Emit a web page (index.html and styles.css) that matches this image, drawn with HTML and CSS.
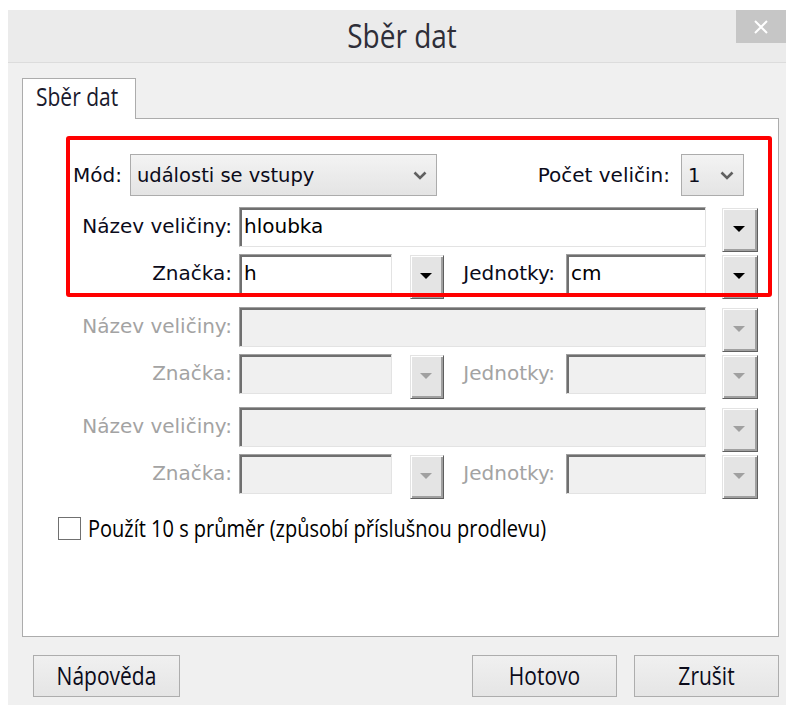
FILE: index.html
```html
<!DOCTYPE html>
<html lang="cs">
<head>
<meta charset="utf-8">
<title>Sběr dat</title>
<link rel="stylesheet" href="styles.css">
</head>
<body>
<div class="window">
  <div class="titlebar">
    <span class="title tall">Sběr dat</span>
    <div class="close">
      <svg width="16" height="16" viewBox="0 0 16 16"><path d="M2 2 L14 14 M14 2 L2 14" stroke="#fff" stroke-width="2" fill="none"/></svg>
    </div>
  </div>

  <div class="content">
    <div class="tab"><span class="tall">Sběr dat</span></div>
    <div class="panel">
      <div class="mode-row">
        <div class="mode-left">
          <span class="lbl">Mód:</span>
          <div class="combo combo-wide">
            <span>události se vstupy</span>
            <svg class="chev" width="14" height="9" viewBox="0 0 14 9"><path d="M1.5 1.5 L7 7 L12.5 1.5" stroke="#606060" stroke-width="2.6" fill="none"/></svg>
          </div>
        </div>
        <div class="mode-right">
          <span class="lbl">Počet veličin:</span>
          <div class="combo combo-small">
            <span>1</span>
            <svg class="chev" width="14" height="9" viewBox="0 0 14 9"><path d="M1.5 1.5 L7 7 L12.5 1.5" stroke="#606060" stroke-width="2.6" fill="none"/></svg>
          </div>
        </div>
      </div>

      <div class="group">
        <div class="row">
          <span class="lbl col-label">Název veličiny:</span>
          <div class="field field-name">hloubka</div>
          <div class="drop drop-wide"><i class="tri"></i></div>
        </div>
        <div class="row">
          <span class="lbl col-label">Značka:</span>
          <div class="field field-sym">h</div>
          <div class="drop drop-narrow"><i class="tri"></i></div>
          <span class="lbl col-unit">Jednotky:</span>
          <div class="field field-unit">cm</div>
          <div class="drop drop-wide"><i class="tri"></i></div>
        </div>
      </div>

      <div class="group disabled">
        <div class="row">
          <span class="lbl col-label">Název veličiny:</span>
          <div class="field field-name"></div>
          <div class="drop drop-wide"><i class="tri"></i></div>
        </div>
        <div class="row">
          <span class="lbl col-label">Značka:</span>
          <div class="field field-sym"></div>
          <div class="drop drop-narrow"><i class="tri"></i></div>
          <span class="lbl col-unit">Jednotky:</span>
          <div class="field field-unit"></div>
          <div class="drop drop-wide"><i class="tri"></i></div>
        </div>
      </div>

      <div class="group disabled">
        <div class="row">
          <span class="lbl col-label">Název veličiny:</span>
          <div class="field field-name"></div>
          <div class="drop drop-wide"><i class="tri"></i></div>
        </div>
        <div class="row">
          <span class="lbl col-label">Značka:</span>
          <div class="field field-sym"></div>
          <div class="drop drop-narrow"><i class="tri"></i></div>
          <span class="lbl col-unit">Jednotky:</span>
          <div class="field field-unit"></div>
          <div class="drop drop-wide"><i class="tri"></i></div>
        </div>
      </div>

      <label class="check-row">
        <span class="checkbox"></span>
        <span class="check-text tall">Použít 10 s průměr (způsobí příslušnou prodlevu)</span>
      </label>

      <div class="highlight"></div>
    </div>

    <div class="buttons">
      <button class="btn btn-help"><span class="tall">Nápověda</span></button>
      <div class="btn-right">
        <button class="btn"><span class="tall">Hotovo</span></button>
        <button class="btn"><span class="tall">Zrušit</span></button>
      </div>
    </div>
  </div>
</div>
</body>
</html>
```

FILE: styles.css
```css
* {
  box-sizing: border-box;
}

body {
  margin: 0;
  background: #ffffff;
  overflow: hidden;
}

.window {
  margin: 10px 0 0 8px;
  width: 778px;
  height: 695px;
  background: #f0f0f0;
  position: relative;
}

/* UI font is drawn slightly taller than wide */
.tall {
  display: inline-block;
  transform: scaleY(1.18);
}

/* title bar */
.titlebar {
  height: 53px;
  background: #ebebeb;
  border-bottom: 1px solid #dcdcdc;
  display: flex;
  justify-content: center;
  align-items: center;
  padding-left: 10px;
}

.title {
  font-family: "Open Sans", sans-serif;
  font-size: 28px;
  color: #2e2e38;
  line-height: 1;
  margin-top: -2px;
}

.close {
  position: absolute;
  top: 0;
  right: 0;
  width: 50px;
  height: 33px;
  background: #c6c6c6;
  display: flex;
  align-items: center;
  justify-content: center;
}

/* tab area */
.content {
  padding: 15px 7px 0 14px;
}

.tab {
  width: 114px;
  height: 41px;
  margin-bottom: -1px;
  position: relative;
  z-index: 1;
  background: #ffffff;
  border: 1px solid #acacac;
  border-bottom: none;
  font-family: "Open Sans", sans-serif;
  font-size: 21px;
  color: #1a1a2e;
  padding: 5px 0 0 13px;
  line-height: 1.3;
}

.panel {
  position: relative;
  height: 519px;
  background: #ffffff;
  border: 1px solid #acacac;
  padding: 35px 0 0 50px;
}

.lbl {
  font-family: "DejaVu Sans", sans-serif;
  font-size: 20px;
  color: #0b0b1a;
  white-space: nowrap;
}

/* mode row */
.mode-row {
  display: flex;
  justify-content: space-between;
  align-items: center;
  height: 42px;
  padding-right: 34px;
}

.mode-left,
.mode-right {
  display: flex;
  align-items: center;
}

.mode-left .lbl {
  margin-right: 8px;
}

.mode-right .lbl {
  margin-right: 11px;
}

.combo {
  height: 42px;
  border: 1px solid #acacac;
  background: linear-gradient(#f3f3f3, #e4e4e4);
  display: flex;
  align-items: center;
  justify-content: space-between;
  font-family: "DejaVu Sans", sans-serif;
  font-size: 19.5px;
  color: #0b0b1a;
  padding: 0 9px 0 6px;
}

.combo-wide {
  width: 307px;
}

.combo-small {
  width: 63px;
}

.chev {
  display: block;
  margin-top: 1px;
}

/* quantity rows */
.group {
  margin-top: 11px;
  display: flex;
  flex-direction: column;
  gap: 3px;
}

.group + .group {
  margin-top: 9px;
}

.row {
  display: flex;
  align-items: flex-start;
  height: 44px;
}

.col-label {
  width: 159px;
  text-align: right;
  line-height: 39px;
  margin-right: 7px;
}

.col-unit {
  width: 112px;
  text-align: right;
  line-height: 39px;
  margin-right: 10px;
  padding-right: 1px;
}

.field {
  height: 40px;
  background: #ffffff;
  border-style: solid;
  border-width: 1px;
  border-color: #a0a0a0 #e3e3e3 #e3e3e3 #a0a0a0;
  box-shadow: inset 2px 2px 0 #6f6f6f;
  font-family: "DejaVu Sans", sans-serif;
  font-size: 20px;
  color: #000000;
  padding: 5px 0 0 4px;
  line-height: 26px;
}

.field-name {
  width: 467px;
  margin-right: 16px;
}

.field-sym {
  width: 153px;
  margin-right: 18px;
}

.field-unit {
  width: 140px;
  margin-right: 16px;
}

.drop {
  height: 44px;
  margin-top: 1px;
  background: #e4e4e4;
  border-style: solid;
  border-width: 1px;
  border-color: #e3e3e3 #5f5f5f #5f5f5f #e3e3e3;
  box-shadow: inset 1px 1px 0 #ffffff, inset -2px -2px 0 #a0a0a0;
  display: flex;
  align-items: center;
  justify-content: center;
  padding: 0 3px 3px 0;
}

.drop-wide {
  width: 36px;
}

.drop-narrow {
  width: 34px;
}

.tri {
  display: block;
  width: 0;
  height: 0;
  border-left: 6px solid transparent;
  border-right: 6px solid transparent;
  border-top: 6px solid #000000;
}

.disabled .lbl {
  color: #a3a3a3;
}

.disabled .field {
  background: #f0f0f0;
}

.disabled .tri {
  border-top-color: #a0a0a0;
}

/* checkbox */
.check-row {
  display: flex;
  align-items: center;
  margin: 17px 0 0 -15px;
}

.checkbox {
  width: 23px;
  height: 23px;
  border: 1px solid #707070;
  background: #ffffff;
  margin-right: 7px;
}

.check-text {
  font-family: "Open Sans", sans-serif;
  font-size: 20px;
  color: #000000;
}

/* red frame around the active quantity */
.highlight {
  position: absolute;
  left: 43px;
  top: 17px;
  width: 706px;
  height: 161px;
  border: 4px solid #ff0000;
  border-radius: 3px;
}

/* bottom buttons */
.buttons {
  display: flex;
  justify-content: space-between;
  margin-top: 18px;
  padding-left: 11px;
}

.btn-right {
  display: flex;
  gap: 17px;
}

.btn {
  height: 42px;
  width: 145px;
  border: 1px solid #adadad;
  background: linear-gradient(#f0f0f0, #e5e5e5);
  font-family: "Open Sans", sans-serif;
  font-size: 21px;
  color: #0b0b1a;
  padding: 0;
}

.btn-help {
  width: 147px;
}
```
